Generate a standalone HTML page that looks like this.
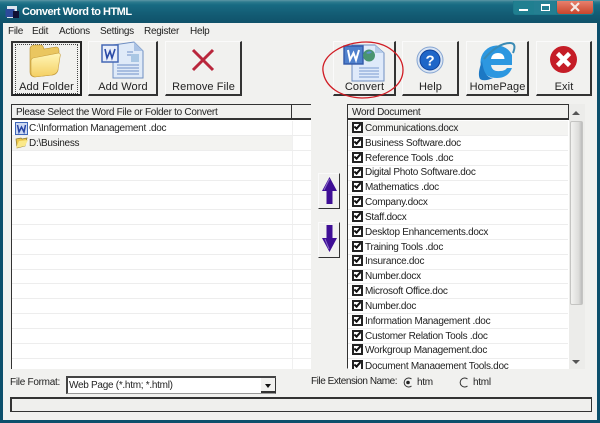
<!DOCTYPE html>
<html><head><meta charset="utf-8"><style>
html,body{margin:0;padding:0;width:600px;height:423px;overflow:hidden;background:#0c4f6c}
*{box-sizing:border-box}
#w{position:relative;width:600px;height:423px;overflow:hidden;font:10px "Liberation Sans",sans-serif;letter-spacing:-.28px;color:#222;filter:blur(.3px)}
#tb{position:absolute;left:0;top:0;width:600px;height:24px;background:linear-gradient(#5d97a6 0,#2c7a8e 2px,#176a82 5px,#135c74 14px,#0f5068 24px)}
#body{position:absolute;left:3px;top:23px;width:594px;height:397px;background:#f1f1ef}
.a{position:absolute;white-space:nowrap}
.btn{position:absolute;top:41px;height:55px;background:#f1f1ef;border-right:2px solid #333;border-bottom:2px solid #333;border-top:1px solid #fafafa;border-left:1px solid #fafafa}
.lbl{position:absolute;top:80px;text-align:center;font-size:11px;letter-spacing:.1px;line-height:15px;color:#222;white-space:nowrap}
.list{position:absolute;background:#fff;border-left:1px solid #333;border-top:1px solid #333}
.hd{position:absolute;height:16px;top:104px;background:#f1f1ef;border:1px solid #333;border-bottom:2px solid #333;line-height:15px;padding-left:4px}
.ln{position:absolute;height:1px;background:#ededed}
.r{position:absolute;left:365px;white-space:nowrap;line-height:15px;color:#222}
.c{position:absolute;left:352px;width:11px;height:11px;border:2px solid #222;background:#fff}
.c:after{content:"";box-sizing:border-box;position:absolute;left:0;top:0;width:7px;height:4px;border-left:2px solid #111;border-bottom:2px solid #111;transform:rotate(-48deg)}
</style></head><body><div id="w">
<div id="tb"></div>
<div id="body"></div>
<svg class="a" style="left:5px;top:5px" width="15" height="15" viewBox="0 0 15 15"><rect x="2" y="1" width="10" height="12" fill="#dfe6ef"/><rect x="0.500" y="4" width="9" height="8" fill="#2c4a9a"/><rect x="8" y="6" width="6" height="7" fill="#113"/></svg>
<div class="a" style="left:22px;top:4px;color:#fff;font-weight:bold;font-size:11px;line-height:16px;letter-spacing:-.5px">Convert Word to HTML</div>
<div class="a" style="left:513px;top:1px;width:81px;height:14px;border-radius:0 0 3px 3px;background:#1d7a8c"></div>
<div class="a" style="left:514px;top:1px;width:20px;height:13px;background:#207f90"></div>
<div class="a" style="left:534px;top:1px;width:22px;height:13px;background:#247f92"></div>
<div class="a" style="left:557px;top:1px;width:36px;height:13px;background:linear-gradient(#e8806c,#c8452c);border-radius:0 0 3px 3px"></div>
<div class="a" style="left:519px;top:9px;width:9px;height:2px;background:#fff"></div>
<div class="a" style="left:541px;top:4px;width:9px;height:7px;border:1px solid #fff;border-top:2px solid #fff"></div>
<svg class="a" style="left:570px;top:2px" width="10" height="10" viewBox="0 0 10 10"><path d="M1 1 L9 9 M9 1 L1 9" stroke="#f4e8e4" stroke-width="2.200"/></svg>

<div class="a" style="left:8px;top:25px;line-height:14px">File</div>
<div class="a" style="left:32px;top:25px;line-height:14px">Edit</div>
<div class="a" style="left:59px;top:25px;line-height:14px">Actions</div>
<div class="a" style="left:100px;top:25px;line-height:14px">Settings</div>
<div class="a" style="left:144px;top:25px;line-height:14px">Register</div>
<div class="a" style="left:190px;top:25px;line-height:14px">Help</div>

<div class="btn" style="left:11px;width:71px;border:2px solid #333;border-right:2px solid #222;border-bottom:2px solid #222"></div>
<div class="a" style="left:15px;top:44px;width:63px;height:50px;border:1px dotted #444"></div>
<div class="btn" style="left:88px;width:70px"></div>
<div class="btn" style="left:165px;width:77px"></div>
<div class="btn" style="left:333px;width:63px"></div>
<div class="btn" style="left:402px;width:57px"></div>
<div class="btn" style="left:466px;width:63px"></div>
<div class="btn" style="left:536px;width:56px"></div>

<svg class="a" style="left:27px;top:43px" width="38" height="36" viewBox="0 0 38 36"><defs><linearGradient id="g" x1="0" y1="0" x2="0" y2="1"><stop offset="0" stop-color="#fff6b8"/><stop offset="1" stop-color="#f4cf62"/></linearGradient></defs><path d="M3 5 Q4 2 8 2 L14 2 Q16 2 17 6 L29 4 Q32 4 32 8 L31 27 Q30 31 26 32 L7 34 Q3 33 3 29Z" fill="#eac660" stroke="#b89030" stroke-width=".6"/><path d="M6 15 L32 10 Q34 11 33 14 L31 27 Q30 31 25 32 L8 34 Q4 33 4 30 L4 18Q4 16 6 15Z" fill="url(#g)" stroke="#c9a040" stroke-width=".6"/></svg>
<div class="lbl" style="left:11px;width:71px">Add Folder</div>

<svg class="a" style="left:101px;top:41px" width="44" height="38" viewBox="0 0 44 38"><path d="M12 4 L33 1 L42 10 L42 37 L12 37Z" fill="#dfeaf8" stroke="#6f8fc2"/><path d="M33 1 L33 10 L42 10Z" fill="#aac2e4"/><path d="M16 24H38M16 27H38M16 30H38M16 33H38M26 11H32M26 14H32" stroke="#6f90c8" fill="none"/><rect x="30" y="13" width="8" height="8" fill="#a9c7e4"/><rect x="1" y="4" width="16" height="17" fill="#e8eefa" stroke="#4568b5" stroke-width="1.500"/><path d="M4 8 L6 17 L9 10 L11 17 L14 8" fill="none" stroke="#2a4aa6" stroke-width="1.600"/></svg>
<div class="lbl" style="left:88px;width:70px">Add Word</div>

<svg class="a" style="left:191px;top:48px" width="24" height="24" viewBox="0 0 24 24"><path d="M2 2 L22 22 M22 2 L2 22" stroke="#b9263c" stroke-width="3"/></svg>
<div class="lbl" style="left:165px;width:77px">Remove File</div>

<svg class="a" style="left:342px;top:42px" width="44" height="40" viewBox="0 0 44 40"><path d="M10 3 L33 3 L42 11 L42 39 L10 39Z" fill="#dfeafa" stroke="#6f8fc2"/><path d="M33 3 L33 11 L42 11Z" fill="#b5cbe8"/><path d="M17 26H37M17 29H37M17 32H37M17 35H37" stroke="#7a9bd0"/><rect x="2" y="4" width="19" height="18" fill="#4f80cc"/><rect x="2" y="4" width="19" height="18" fill="none" stroke="#3258a8" stroke-width="1.400"/><path d="M6 8 L8 18 L11.500 11 L14 18 L17 8" fill="none" stroke="#fff" stroke-width="2"/><circle cx="27" cy="13.500" r="6" fill="#4a9470"/><path d="M24 11 Q27 8 30 10 Q27 13 24 11Z" fill="#5e8fd0"/></svg>
<div class="lbl" style="left:333px;width:63px">Convert</div>

<svg class="a" style="left:416px;top:46px" width="28" height="28" viewBox="0 0 28 28"><circle cx="14" cy="14" r="13" fill="#dbe6f4" stroke="#86a5d2"/><circle cx="14" cy="14" r="10" fill="#1f66c8" stroke="#0f3f98"/><text x="14" y="19.500" text-anchor="middle" font-family="Liberation Sans" font-weight="bold" font-size="15" fill="#fff">?</text></svg>
<div class="lbl" style="left:402px;width:57px">Help</div>

<svg class="a" style="left:476px;top:41px" width="42" height="42" viewBox="0 0 42 42"><path d="M6 28 A16 16 0 0 1 36 14 L36 24 L15 24 Q16 31 24 30 Q29 30 31 27 L36 27 Q32 37 21 37 Q10 37 6 28Z" fill="#2c97e0"/><path d="M15 18 Q16 12 22 12 Q28 12 28.500 18Z" fill="#fff"/><path d="M8 18 Q22 2 34 2 Q41 2 37 12" fill="none" stroke="#3a8ab4" stroke-width="2"/><path d="M6 20 Q1 33 4 38 Q8 41 17 37 Q8 37 6 20Z" fill="#1c78c4"/></svg>
<div class="lbl" style="left:466px;width:63px">HomePage</div>

<svg class="a" style="left:549px;top:45px" width="29" height="29" viewBox="0 0 29 29"><circle cx="14.500" cy="14.500" r="13.500" fill="#c51d27"/><path d="M8.500 8.500 L20.500 20.500 M20.500 8.500 L8.500 20.500" stroke="#fff" stroke-width="4.500"/></svg>
<div class="lbl" style="left:536px;width:56px">Exit</div>

<svg class="a" style="left:320px;top:40px" width="86" height="60" viewBox="0 0 86 60"><path d="M3 31 C1 15 24 2 46 2 C68 2 83 16 83 30 C83 46 65 58 42 58 C20 57 5 47 3 31Z" fill="none" stroke="#d01c24" stroke-width="1.300"/></svg>

<div class="list" style="left:11px;top:104px;width:300px;height:265px"></div>
<div class="hd" style="left:11px;width:281px">Please Select the Word File or Folder to Convert</div>
<div class="hd" style="left:291px;width:20px;border-right:none"></div>
<div class="a" style="left:12px;top:121px;width:280px;height:15px;background:#fff"></div>
<div class="a" style="left:12px;top:136px;width:280px;height:15px;background:#f3f3f1"></div>
<div class="a" style="left:292px;top:121px;width:1px;height:248px;background:#f0f0f0"></div>
<div class="ln" style="left:12px;top:135px;width:299px"></div>
<div class="ln" style="left:12px;top:150px;width:299px"></div>
<div class="ln" style="left:12px;top:165px;width:299px"></div>
<div class="ln" style="left:12px;top:180px;width:299px"></div>
<div class="ln" style="left:12px;top:194px;width:299px"></div>
<div class="ln" style="left:12px;top:209px;width:299px"></div>
<div class="ln" style="left:12px;top:224px;width:299px"></div>
<div class="ln" style="left:12px;top:239px;width:299px"></div>
<div class="ln" style="left:12px;top:254px;width:299px"></div>
<div class="ln" style="left:12px;top:269px;width:299px"></div>
<div class="ln" style="left:12px;top:283px;width:299px"></div>
<div class="ln" style="left:12px;top:298px;width:299px"></div>
<div class="ln" style="left:12px;top:313px;width:299px"></div>
<div class="ln" style="left:12px;top:328px;width:299px"></div>
<div class="ln" style="left:12px;top:343px;width:299px"></div>
<div class="ln" style="left:12px;top:358px;width:299px"></div>
<svg class="a" style="left:15px;top:122px" width="13" height="13" viewBox="0 0 13 13"><rect x=".5" y=".5" width="12" height="12" fill="#cdd9f2" stroke="#3f66b8"/><path d="M2.500 3 L4 10 L6.500 5 L9 10 L10.500 3" fill="none" stroke="#2745a5" stroke-width="1.500"/></svg>
<div class="a" style="left:29px;top:122px;line-height:14px">C:\Information Management .doc</div>
<svg class="a" style="left:15px;top:136px" width="13" height="13" viewBox="0 0 13 13"><path d="M1 3 L6 2 L7 3 L12 2 L10 10 L2 12Z" fill="#eec64a" stroke="#8c7a30" stroke-width=".7"/><path d="M1 12 L4 5 L13 4 L10 10Z" fill="#fbe98a"/></svg>
<div class="a" style="left:29px;top:137px;line-height:14px">D:\Business</div>

<div class="a" style="left:318px;top:173px;width:22px;height:36px;border-right:1px solid #333;border-bottom:1px solid #333;border-top:1px solid #fafafa;border-left:1px solid #fafafa"></div>
<div class="a" style="left:318px;top:222px;width:22px;height:36px;border-right:1px solid #333;border-bottom:1px solid #333;border-top:1px solid #fafafa;border-left:1px solid #fafafa"></div>
<svg class="a" style="left:322px;top:176px" width="15" height="29" viewBox="0 0 15 29"><path d="M7.500 1 L15 15 L10.500 15 L10.500 28 L4.500 28 L4.500 15 L0 15Z" fill="#3f0f96"/><path d="M7.500 3 L2 14" stroke="#8a6cc8"/></svg>
<svg class="a" style="left:322px;top:224px" width="15" height="29" viewBox="0 0 15 29"><path d="M7.500 28 L15 14 L10.500 14 L10.500 1 L4.500 1 L4.500 14 L0 14Z" fill="#3f0f96"/><path d="M3 15 L7 25" stroke="#8a6cc8"/></svg>

<div class="list" style="left:347px;top:104px;width:238px;height:265px;border-right:1px solid #fff;border-bottom:1px solid #fff"></div>
<div class="hd" style="left:347px;width:222px">Word Document</div>
<div class="a" style="left:569px;top:104px;width:16px;height:265px;background:#ececea"></div>
<div class="a" style="left:570px;top:121px;width:13px;height:184px;background:linear-gradient(90deg,#f2f2f0,#dcdcda 70%,#bbb);border:1px solid #c4c4c2;border-radius:2px"></div>
<div class="a" style="left:572px;top:111px;border:4px solid transparent;border-bottom:4px solid #555;border-top:none"></div>
<div class="a" style="left:572px;top:360px;border:4px solid transparent;border-top:4px solid #555;border-bottom:none"></div>
<div class="a" style="left:348px;top:121px;width:220px;height:14px;background:#f4f4f2"></div>

<div class="ln" style="left:348px;top:135px;width:220px"></div><div class="ln" style="left:348px;top:150px;width:220px"></div><div class="ln" style="left:348px;top:165px;width:220px"></div><div class="ln" style="left:348px;top:180px;width:220px"></div><div class="ln" style="left:348px;top:194px;width:220px"></div><div class="ln" style="left:348px;top:209px;width:220px"></div><div class="ln" style="left:348px;top:224px;width:220px"></div><div class="ln" style="left:348px;top:239px;width:220px"></div><div class="ln" style="left:348px;top:254px;width:220px"></div><div class="ln" style="left:348px;top:269px;width:220px"></div><div class="ln" style="left:348px;top:283px;width:220px"></div><div class="ln" style="left:348px;top:298px;width:220px"></div><div class="ln" style="left:348px;top:313px;width:220px"></div><div class="ln" style="left:348px;top:328px;width:220px"></div><div class="ln" style="left:348px;top:343px;width:220px"></div><div class="ln" style="left:348px;top:358px;width:220px"></div>

<div class="c" style="top:122px"></div><div class="r" style="top:121px">Communications.docx</div>
<div class="c" style="top:137px"></div><div class="r" style="top:136px">Business Software.doc</div>
<div class="c" style="top:152px"></div><div class="r" style="top:151px">Reference Tools .doc</div>
<div class="c" style="top:167px"></div><div class="r" style="top:165px">Digital Photo Software.doc</div>
<div class="c" style="top:181px"></div><div class="r" style="top:180px">Mathematics .doc</div>
<div class="c" style="top:196px"></div><div class="r" style="top:195px">Company.docx</div>
<div class="c" style="top:211px"></div><div class="r" style="top:210px">Staff.docx</div>
<div class="c" style="top:226px"></div><div class="r" style="top:225px">Desktop Enhancements.docx</div>
<div class="c" style="top:241px"></div><div class="r" style="top:240px">Training Tools .doc</div>
<div class="c" style="top:255px"></div><div class="r" style="top:254px">Insurance.doc</div>
<div class="c" style="top:270px"></div><div class="r" style="top:269px">Number.docx</div>
<div class="c" style="top:285px"></div><div class="r" style="top:284px">Microsoft Office.doc</div>
<div class="c" style="top:300px"></div><div class="r" style="top:299px">Number.doc</div>
<div class="c" style="top:315px"></div><div class="r" style="top:314px">Information Management .doc</div>
<div class="c" style="top:330px"></div><div class="r" style="top:329px">Customer Relation Tools .doc</div>
<div class="c" style="top:344px"></div><div class="r" style="top:343px">Workgroup Management.doc</div>
<div class="a" style="left:348px;top:359px;width:220px;height:10px;overflow:hidden;background:#fff"><div class="c" style="left:4px;top:1px"></div><div class="r" style="left:17px;top:0">Document Management Tools.doc</div></div>

<div class="a" style="left:10px;top:376px;line-height:14px">File Format:</div>
<div class="a" style="left:66px;top:376px;width:210px;height:18px;background:#fff;border:2px solid #444;border-right:1px solid #555;border-bottom:1px solid #999;line-height:16px;padding-left:1px">Web Page (*.htm; *.html)</div>
<div class="a" style="left:261px;top:378px;width:15px;height:15px;background:#f1f1ef;border-right:1px solid #333;border-bottom:2px solid #333"></div>
<div class="a" style="left:265px;top:384px;border:3.500px solid transparent;border-top:4px solid #111;border-bottom:none"></div>

<div class="a" style="left:311px;top:375px;line-height:14px;letter-spacing:-.45px">File Extension Name:</div>
<svg class="a" style="left:402px;top:377px" width="13" height="12" viewBox="0 0 13 12"><path d="M9.500 2 A4.500 4.500 0 1 0 9.500 9" fill="none" stroke="#333"/><circle cx="6" cy="5.500" r="1.800" fill="#222"/></svg>
<div class="a" style="left:417px;top:376px;line-height:14px">htm</div>
<svg class="a" style="left:458px;top:377px" width="13" height="12" viewBox="0 0 13 12"><path d="M9.500 2 A4.500 4.500 0 1 0 9.500 9" fill="none" stroke="#333"/></svg>
<div class="a" style="left:473px;top:376px;line-height:14px">html</div>

<div class="a" style="left:10px;top:397px;width:582px;height:15px;border:1px solid #333;border-width:2px 1px 1px 2px;background:#efefed"></div>
</div></body></html>
